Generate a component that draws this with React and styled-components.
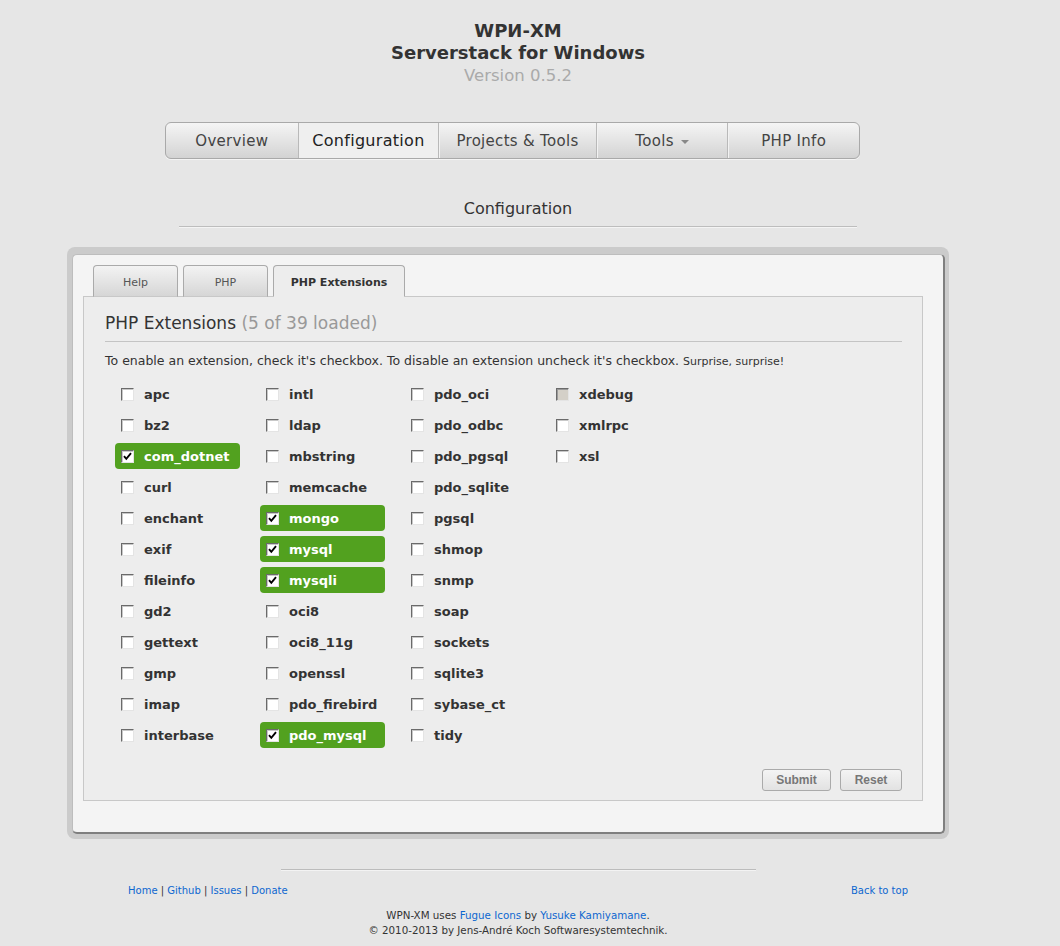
import React from "react";
import styled, { createGlobalStyle } from "styled-components";

const Global = createGlobalStyle`
  html, body { margin: 0; padding: 0; background: #e6e6e6; }
  body { font-family: "DejaVu Sans", Verdana, sans-serif; color: #333; }
  * { box-sizing: border-box; }
  a { color: #0d66d0; text-decoration: none; }
`;

const Page = styled.div`
  width: 902px;
  margin-left: 67px;
  padding-top: 20px;
  padding-bottom: 10px;
`;

const Header = styled.header`
  text-align: center;
  line-height: 22px;
`;

const Title = styled.div`
  font-size: 18px;
  font-weight: bold;
  color: #333;
`;

const Version = styled.div`
  font-size: 16.5px;
  color: #aaa;
  line-height: 24px;
`;

const Nav = styled.nav`
  display: flex;
  margin: 34px 0 0 98px;
  width: 695px;
  height: 37px;
  border: 1px solid #a9a9a9;
  border-radius: 6px;
  overflow: hidden;
  background: linear-gradient(#f5f5f5, #d3d3d3);
  box-shadow: 0 1px 0 #f4f4f4;
`;

const NavItem = styled.div`
  width: ${(p) => p.$w}px;
  display: flex;
  align-items: center;
  justify-content: center;
  gap: 7px;
  letter-spacing: 0.3px;
  font-size: ${(p) => (p.$active ? "16px" : "15px")};
  color: ${(p) => (p.$active ? "#222" : "#444")};
  background: ${(p) => (p.$active ? "#efefef" : "transparent")};
  border-left: ${(p) => (p.$first ? "none" : "1px solid #b9b9b9")};
  box-shadow: ${(p) => (p.$first || p.$active ? "none" : "inset 1px 0 0 #f2f2f2")};
`;

const Caret = styled.span`
  width: 0;
  height: 0;
  border-left: 4px solid transparent;
  border-right: 4px solid transparent;
  border-top: 4px solid #888;
  margin-top: 3px;
`;

const SectionTitle = styled.h2`
  margin: 40px auto 0;
  width: 678px;
  text-align: center;
  font-size: 16px;
  font-weight: normal;
  color: #333;
  line-height: 20px;
  padding-bottom: 7px;
  border-bottom: 1px solid #bdbdbd;
  box-shadow: 0 1px 0 #f4f4f4;
`;

const Frame = styled.div`
  margin-top: 20px;
  width: 882px;
  background: #cbcbcb;
  border-radius: 8px;
  padding: 7px 4px 5px 5px;
`;

const Panel = styled.div`
  background: #f4f4f4;
  border: 1px solid #bdbdbd;
  border-right: 2px solid #7f7f7f;
  border-bottom: 2px solid #7f7f7f;
  border-radius: 5px;
  padding: 10px 20px 31px 10px;
`;

const TabBar = styled.div`
  display: flex;
  gap: 5px;
  margin-left: 10px;
  position: relative;
  z-index: 1;
  margin-bottom: -1px;
`;

const Tab = styled.div`
  width: ${(p) => p.$w}px;
  height: 32px;
  display: flex;
  align-items: center;
  justify-content: center;
  font-size: 11px;
  font-weight: ${(p) => (p.$active ? "bold" : "normal")};
  color: ${(p) => (p.$active ? "#333" : "#555")};
  border: 1px solid #aaa;
  border-bottom: ${(p) => (p.$active ? "1px solid #ededed" : "1px solid #c8c8c8")};
  border-radius: 4px 4px 0 0;
  background: ${(p) => (p.$active ? "#ededed" : "linear-gradient(#f3f3f3, #d6d6d6)")};
  padding-top: 2px;
`;

const Content = styled.div`
  background: #ededed;
  border: 1px solid #c8c8c8;
  padding: 15px 20px 9px 21px;
`;

const ExtHeading = styled.h3`
  margin: 0;
  font-size: 17px;
  font-weight: normal;
  line-height: 22px;
  color: #333;
  padding-bottom: 7px;
  border-bottom: 1px solid #c4c4c4;
`;

const Muted = styled.span`
  color: #999;
`;

const Note = styled.p`
  margin: 12px 0 0;
  font-size: 12.5px;
  line-height: 14px;
  color: #333;
`;

const Small = styled.span`
  font-size: 11px;
`;

const Grid = styled.div`
  margin: 12px 0 0 10px;
  display: grid;
  grid-template-rows: repeat(12, 26px);
  grid-auto-flow: column;
  grid-auto-columns: 125px;
  column-gap: 20px;
  row-gap: 5px;
`;

const Item = styled.label`
  display: flex;
  align-items: center;
  gap: 10px;
  padding-left: 6px;
  border-radius: 4px;
  font-size: 13px;
  font-weight: bold;
  background: ${(p) => (p.$on ? "#52a11f" : "transparent")};
  color: ${(p) => (p.$on ? "#fff" : "#333")};
`;

const Box = styled.span`
  width: 13px;
  height: 13px;
  flex: none;
  display: flex;
  align-items: center;
  justify-content: center;
  border: 1px solid;
  border-color: #6a6a6a #e4e4e4 #e4e4e4 #6a6a6a;
  background: ${(p) => (p.$disabled ? "#d4d0c8" : "#fff")};
  box-shadow: inset 1px 1px 0 ${(p) => (p.$disabled ? "#9a9a9a" : "#c8c8c8")};
`;

const Actions = styled.div`
  display: flex;
  justify-content: flex-end;
  gap: 9px;
  margin-top: 21px;
`;

const Button = styled.button`
  width: ${(p) => p.$w}px;
  height: 22px;
  padding: 0;
  font-family: "Liberation Sans", Arial, sans-serif;
  font-size: 12px;
  font-weight: bold;
  color: #777;
  border: 1px solid #aaa;
  border-radius: 3px;
  background: linear-gradient(#f4f4f4, #e2e2e2);
`;

const FooterRule = styled.hr`
  width: 475px;
  margin: 30px auto 0;
  border: 0;
  border-top: 1px solid #bcbcbc;
  border-bottom: 1px solid #f3f3f3;
`;

const FooterLinks = styled.div`
  display: flex;
  justify-content: space-between;
  padding: 0 61px;
  margin-top: 13px;
  font-size: 10px;
  line-height: 13px;
  color: #333;
`;

const Credits = styled.div`
  margin-top: 11px;
  text-align: center;
  font-size: 10.3px;
  line-height: 15px;
  color: #333;
`;

const Check = () => (
  <svg width="9" height="9" viewBox="0 0 9 9">
    <path d="M1 4.2 L3.3 6.8 L8 1.2" fill="none" stroke="#000" strokeWidth="1.9" />
  </svg>
);

const cols = [
  ["apc", "bz2", "com_dotnet", "curl", "enchant", "exif", "fileinfo", "gd2", "gettext", "gmp", "imap", "interbase"],
  ["intl", "ldap", "mbstring", "memcache", "mongo", "mysql", "mysqli", "oci8", "oci8_11g", "openssl", "pdo_firebird", "pdo_mysql"],
  ["pdo_oci", "pdo_odbc", "pdo_pgsql", "pdo_sqlite", "pgsql", "shmop", "snmp", "soap", "sockets", "sqlite3", "sybase_ct", "tidy"],
  ["xdebug", "xmlrpc", "xsl"],
];
const loaded = ["com_dotnet", "mongo", "mysql", "mysqli", "pdo_mysql"];

const navItems = [
  { label: "Overview", w: 132 },
  { label: "Configuration", w: 141, active: true },
  { label: "Projects & Tools", w: 158 },
  { label: "Tools", w: 132, caret: true },
  { label: "PHP Info", w: 132 },
];

export default function App() {
  return (
    <>
      <Global />
      <Page>
        <Header>
          <Title>WPИ-XM</Title>
          <Title>Serverstack for Windows</Title>
          <Version>Version 0.5.2</Version>
        </Header>

        <Nav>
          {navItems.map((n, i) => (
            <NavItem key={n.label} $w={n.w} $active={n.active} $first={i === 0}>
              {n.label}
              {n.caret && <Caret />}
            </NavItem>
          ))}
        </Nav>

        <SectionTitle>Configuration</SectionTitle>

        <Frame>
          <Panel>
            <TabBar>
              <Tab $w={85}>Help</Tab>
              <Tab $w={85}>PHP</Tab>
              <Tab $w={132} $active>PHP Extensions</Tab>
            </TabBar>
            <Content>
              <ExtHeading>
                PHP Extensions <Muted>(5 of 39 loaded)</Muted>
              </ExtHeading>
              <Note>
                To enable an extension, check it's checkbox. To disable an extension uncheck it's checkbox.{" "}
                <Small>Surprise, surprise!</Small>
              </Note>
              <Grid>
                {cols.flat().map((name) => {
                  const on = loaded.includes(name);
                  return (
                    <Item key={name} $on={on}>
                      <Box $disabled={name === "xdebug"}>{on && <Check />}</Box>
                      {name}
                    </Item>
                  );
                })}
              </Grid>
              <Actions>
                <Button $w={69}>Submit</Button>
                <Button $w={62}>Reset</Button>
              </Actions>
            </Content>
          </Panel>
        </Frame>

        <FooterRule />
        <FooterLinks>
          <span>
            <a href="#">Home</a> | <a href="#">Github</a> | <a href="#">Issues</a> | <a href="#">Donate</a>
          </span>
          <a href="#">Back to top</a>
        </FooterLinks>
        <Credits>
          WPN-XM uses <a href="#">Fugue Icons</a> by <a href="#">Yusuke Kamiyamane</a>.
          <br />© 2010-2013 by Jens-André Koch Softwaresystemtechnik.
        </Credits>
      </Page>
    </>
  );
}
